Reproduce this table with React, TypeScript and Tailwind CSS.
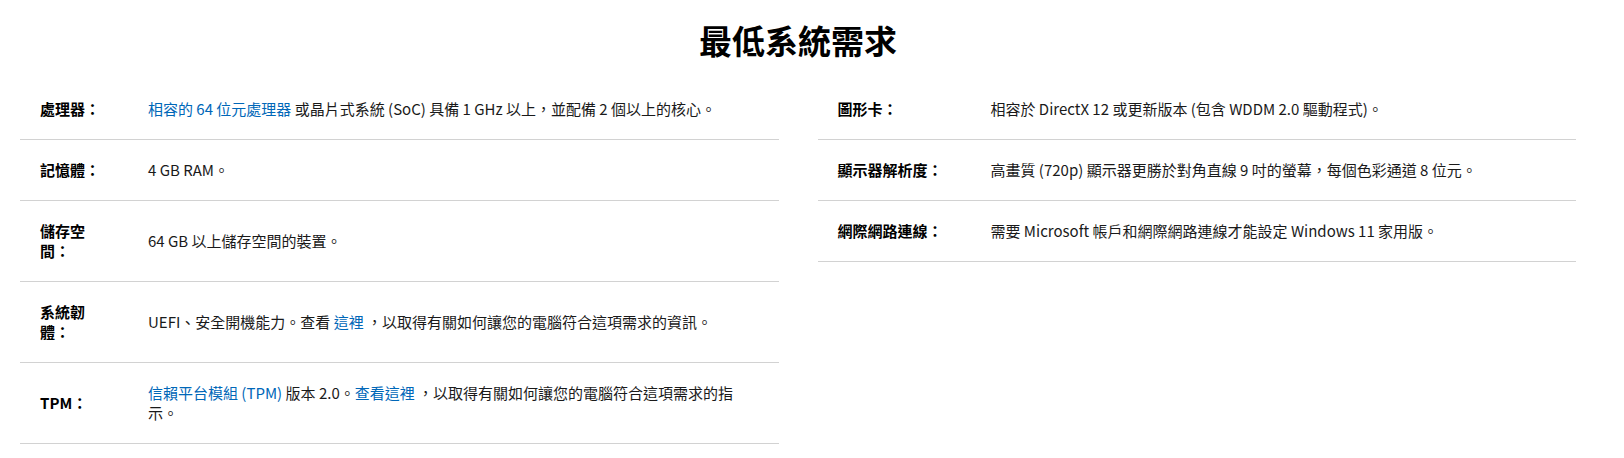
import React from "react";

type Row = { label: string; value: React.ReactNode };

const Link = ({ children }: { children: React.ReactNode }) => (
  <a href="#" className="text-[#0067b8]">
    {children}
  </a>
);

const leftRows: Row[] = [
  {
    label: "處理器：",
    value: (
      <>
        <Link>相容的 64 位元處理器</Link> 或晶片式系統 (SoC) 具備 1 GHz 以上，並配備 2 個以上的核心。
      </>
    ),
  },
  { label: "記憶體：", value: "4 GB RAM。" },
  { label: "儲存空間：", value: "64 GB 以上儲存空間的裝置。" },
  {
    label: "系統韌體：",
    value: (
      <>
        UEFI、安全開機能力。查看 <Link>這裡</Link> ，以取得有關如何讓您的電腦符合這項需求的資訊。
      </>
    ),
  },
  {
    label: "TPM：",
    value: (
      <>
        <Link>信賴平台模組 (TPM)</Link> 版本 2.0。<Link>查看這裡</Link> ，以取得有關如何讓您的電腦符合這項需求的指示。
      </>
    ),
  },
];

const rightRows: Row[] = [
  { label: "圖形卡：", value: "相容於 DirectX 12 或更新版本 (包含 WDDM 2.0 驅動程式)。" },
  { label: "顯示器解析度：", value: "高畫質 (720p) 顯示器更勝於對角直線 9 吋的螢幕，每個色彩通道 8 位元。" },
  { label: "網際網路連線：", value: "需要 Microsoft 帳戶和網際網路連線才能設定 Windows 11 家用版。" },
];

function SpecList({ rows, labelWidth }: { rows: Row[]; labelWidth: string }) {
  return (
    <div>
      {rows.map((row) => (
        <div
          key={row.label}
          className="flex items-center py-5 pl-5 pr-5 border-b border-[#d2d2d2]"
        >
          <div className={`${labelWidth} shrink-0 font-semibold text-black`}>
            {row.label}
          </div>
          <div className="flex-1 text-[#1a1a1a]">{row.value}</div>
        </div>
      ))}
    </div>
  );
}

export default function App() {
  return (
    <div
      className="bg-white min-h-screen pl-5 pr-[48px] pt-5 text-[15px] leading-[20px]"
      style={{ fontFamily: '"Noto Sans CJK TC", "Noto Sans", sans-serif' }}
    >
      <h1 className="text-center text-[33px] leading-[40px] font-bold text-black mb-[19px]">
        最低系統需求
      </h1>
      <div className="grid grid-cols-2 gap-[39px]">
        <SpecList rows={leftRows} labelWidth="w-[108px] pr-[42px]" />
        <SpecList rows={rightRows} labelWidth="w-[153px]" />
      </div>
    </div>
  );
}
